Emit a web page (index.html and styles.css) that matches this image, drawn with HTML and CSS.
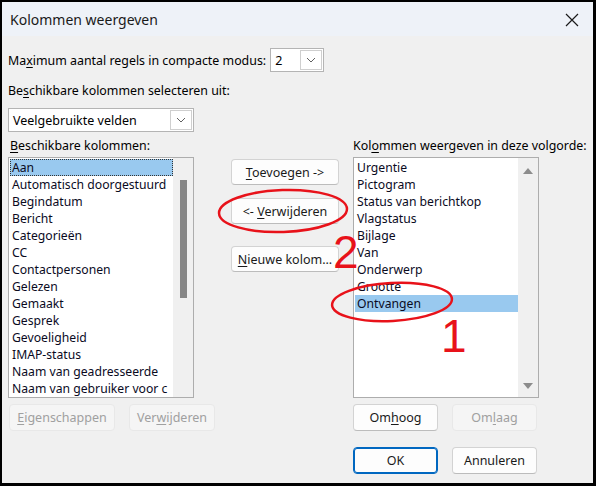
FILE: index.html
```html
<!DOCTYPE html>
<html lang="nl">
<head>
  <meta charset="UTF-8" />
  <title>Kolommen weergeven</title>
  <link rel="stylesheet" href="styles.css">
</head>
<body>

  <div class="dialog">
    <div class="titlebar">
      <span class="title">Kolommen weergeven</span>
      <span class="close">
        <svg width="14" height="14" viewBox="0 0 14 14"><path d="M1 1 L13 13 M13 1 L1 13" stroke="#1a1a1a" stroke-width="1.2" fill="none"/></svg>
      </span>
    </div>

    <div class="content">
      <div class="row-max">
        <span class="label">Ma<u>x</u>imum aantal regels in compacte modus:</span>
        <div class="combo combo-small">
          <span class="combo-text">2</span>
          <span class="drop"><svg width="10" height="6" viewBox="0 0 10 6"><path d="M1 1 L5 5 L9 1" stroke="#606060" stroke-width="1" fill="none"/></svg></span>
        </div>
      </div>

      <div class="label label-src">Be<u>s</u>chikbare kolommen selecteren uit:</div>
      <div class="combo combo-wide">
        <span class="combo-text">Veelgebruikte velden</span>
        <span class="drop"><svg width="10" height="6" viewBox="0 0 10 6"><path d="M1 1 L5 5 L9 1" stroke="#606060" stroke-width="1" fill="none"/></svg></span>
      </div>

      <div class="columns">
        <!-- beschikbare kolommen -->
        <div class="col col-left">
          <div class="label"><u>B</u>eschikbare kolommen:</div>
          <div class="listbox">
            <ul class="items">
              <li class="selected focus">Aan</li>
              <li>Automatisch doorgestuurd</li>
              <li>Begindatum</li>
              <li>Bericht</li>
              <li>Categorieën</li>
              <li>CC</li>
              <li>Contactpersonen</li>
              <li>Gelezen</li>
              <li>Gemaakt</li>
              <li>Gesprek</li>
              <li>Gevoeligheid</li>
              <li>IMAP-status</li>
              <li>Naam van geadresseerde</li>
              <li>Naam van gebruiker voor c</li>
            </ul>
            <div class="vscroll"><div class="thumb"></div></div>
          </div>
          <div class="btn-row">
            <button class="btn btn-eig" disabled><u>E</u>igenschappen</button>
            <button class="btn btn-verw" disabled>Ver<u>w</u>ijderen</button>
          </div>
        </div>

        <!-- knoppen midden -->
        <div class="col col-mid">
          <button class="btn btn-mid"><u>T</u>oevoegen -&gt;</button>
          <button class="btn btn-mid btn-remove">&lt;- <u>V</u>erwijderen</button>
          <button class="btn btn-mid btn-new"><u>N</u>ieuwe kolom...</button>
        </div>

        <!-- weergegeven kolommen -->
        <div class="col col-right">
          <div class="label">Kol<u>o</u>mmen weergeven in deze volgorde:</div>
          <div class="listbox">
            <ul class="items">
              <li>Urgentie</li>
              <li>Pictogram</li>
              <li>Status van berichtkop</li>
              <li>Vlagstatus</li>
              <li>Bijlage</li>
              <li>Van</li>
              <li>Onderwerp</li>
              <li>Grootte</li>
              <li class="selected">Ontvangen</li>
            </ul>
            <div class="vscroll vscroll-arrows">
              <span class="arrow up"></span>
              <span class="arrow down"></span>
            </div>
          </div>
          <div class="btn-row">
            <button class="btn">Om<u>h</u>oog</button>
            <button class="btn" disabled>Om<u>l</u>aag</button>
          </div>
          <div class="btn-row btn-row-ok">
            <button class="btn btn-ok">OK</button>
            <button class="btn">Annuleren</button>
          </div>
        </div>
      </div>
    </div>

    <!-- rode markeringen -->
    <svg class="marks" width="596" height="486" viewBox="0 0 596 486">
      <ellipse cx="283" cy="211" rx="64" ry="21" fill="none" stroke="#e8121a" stroke-width="2.5" transform="rotate(-2 283 211)"/>
      <text x="333" y="268" class="mark-num">2</text>
      <ellipse cx="392" cy="302" rx="60" ry="19" fill="none" stroke="#e8121a" stroke-width="2.5" transform="rotate(-3 392 302)"/>
      <text x="441" y="352" class="mark-num">1</text>
    </svg>
  </div>

</body>
</html>
```

FILE: styles.css
```css
body {
  margin: 0;
  background-color: #000;
}

.dialog {
  position: relative;
  box-sizing: border-box;
  width: 596px;
  height: 486px;
  border: 2px solid #000;
  border-right-width: 3px;
  border-bottom-width: 3px;
  background-color: #f0f0f0;
  font-family: "Noto Sans", "Open Sans", sans-serif;
  font-size: 12.4px;
  color: #000;
  overflow: hidden;
}

.titlebar {
  height: 34px;
  background-color: #eef2f8;
  display: flex;
  align-items: center;
  justify-content: space-between;
  padding: 0 14px 0 8px;
}

.title {
  font-size: 14px;
  color: #1a1a1a;
}

.close {
  display: flex;
  margin-top: 2px;
}

.content {
  padding: 0 0 0 6px;
}

u {
  text-decoration-thickness: 1px;
  text-underline-offset: 2px;
}

.label {
  line-height: 17px;
  white-space: nowrap;
}

.row-max {
  display: flex;
  align-items: center;
  margin-top: 12px;
}

.row-max .label {
  margin-right: 4px;
}

.combo {
  box-sizing: border-box;
  height: 24px;
  background-color: #fff;
  border: 1px solid #b4b4b4;
  display: flex;
  align-items: center;
  justify-content: space-between;
  padding: 0 1px 0 4px;
}

.combo-small {
  width: 54px;
}

.combo-wide {
  width: 186px;
  margin-top: 9px;
}

.combo-text {
  font-size: 12.5px;
}

.drop {
  box-sizing: border-box;
  width: 22px;
  height: 20px;
  border: 1px solid #cfcfcf;
  background-color: #fff;
  display: flex;
  align-items: center;
  justify-content: center;
}

.label-src {
  margin-top: 10px;
}

.columns {
  display: flex;
  margin-top: 5px;
}

.col {
  display: flex;
  flex-direction: column;
}

.col-left,
.col-right {
  width: 186px;
}

.col-left .label {
  padding-left: 2px;
}

.listbox {
  box-sizing: border-box;
  height: 241px;
  margin-top: 3px;
  background-color: #fff;
  border: 1px solid #adadad;
  display: flex;
  overflow: hidden;
}

.items {
  list-style: none;
  margin: 0;
  padding: 1px 0 0 1px;
  flex: 1;
  min-width: 0;
}

.items li {
  box-sizing: border-box;
  height: 17px;
  line-height: 17px;
  padding-left: 2px;
  font-size: 12.2px;
  white-space: nowrap;
  overflow: hidden;
  color: #0a0a1e;
}

.items li.selected {
  background-color: #99c9ef;
}

.items li.focus {
  outline: 1px dotted #333;
  outline-offset: -1px;
}

.vscroll {
  width: 20px;
  background-color: #f0f0f0;
  position: relative;
  flex-shrink: 0;
}

.vscroll .thumb {
  margin: 22px 0 0 7px;
  width: 7px;
  height: 118px;
  background-color: #868686;
}

.vscroll-arrows {
  display: flex;
  flex-direction: column;
  justify-content: space-between;
  align-items: center;
  padding: 10px 0 8px;
}

.arrow {
  width: 0;
  height: 0;
  border-left: 5px solid transparent;
  border-right: 5px solid transparent;
}

.arrow.up {
  border-bottom: 6px solid #8c8c8c;
}

.arrow.down {
  border-top: 6px solid #8c8c8c;
}

.btn-row {
  display: flex;
  gap: 14px;
  margin-top: 6px;
}

.col-left .btn-row {
  padding-left: 1px;
}

.btn-row-ok {
  margin-top: 16px;
}

.btn {
  box-sizing: border-box;
  flex-shrink: 0;
  width: 85px;
  height: 27px;
  padding: 0;
  font-family: inherit;
  font-size: 12.5px;
  color: #1a1a1a;
  background-color: #fdfdfd;
  border: 1px solid #d3d3d3;
  border-bottom-color: #bcbcbc;
  border-radius: 4px;
}

.btn:disabled {
  background-color: #f5f5f5;
  border-color: #e8e8e8;
  color: #a0a0a0;
}

.btn-eig {
  width: 106px;
}

.btn-verw {
  width: 86px;
}

.btn-ok {
  border: 1px solid #0067c0;
  box-shadow: inset 0 0 0 1px #0067c0;
}

.col-mid {
  margin-left: 37px;
  margin-right: 14px;
  padding-top: 22px;
}

.btn-mid {
  width: 108px;
  height: 26px;
}

.btn-remove {
  margin-top: 13px;
}

.btn-new {
  margin-top: 22px;
}

.marks {
  position: absolute;
  left: -2px;
  top: -2px;
  pointer-events: none;
}

.mark-num {
  font-family: "Liberation Sans", sans-serif;
  font-size: 46px;
  fill: #e8121a;
}
```
